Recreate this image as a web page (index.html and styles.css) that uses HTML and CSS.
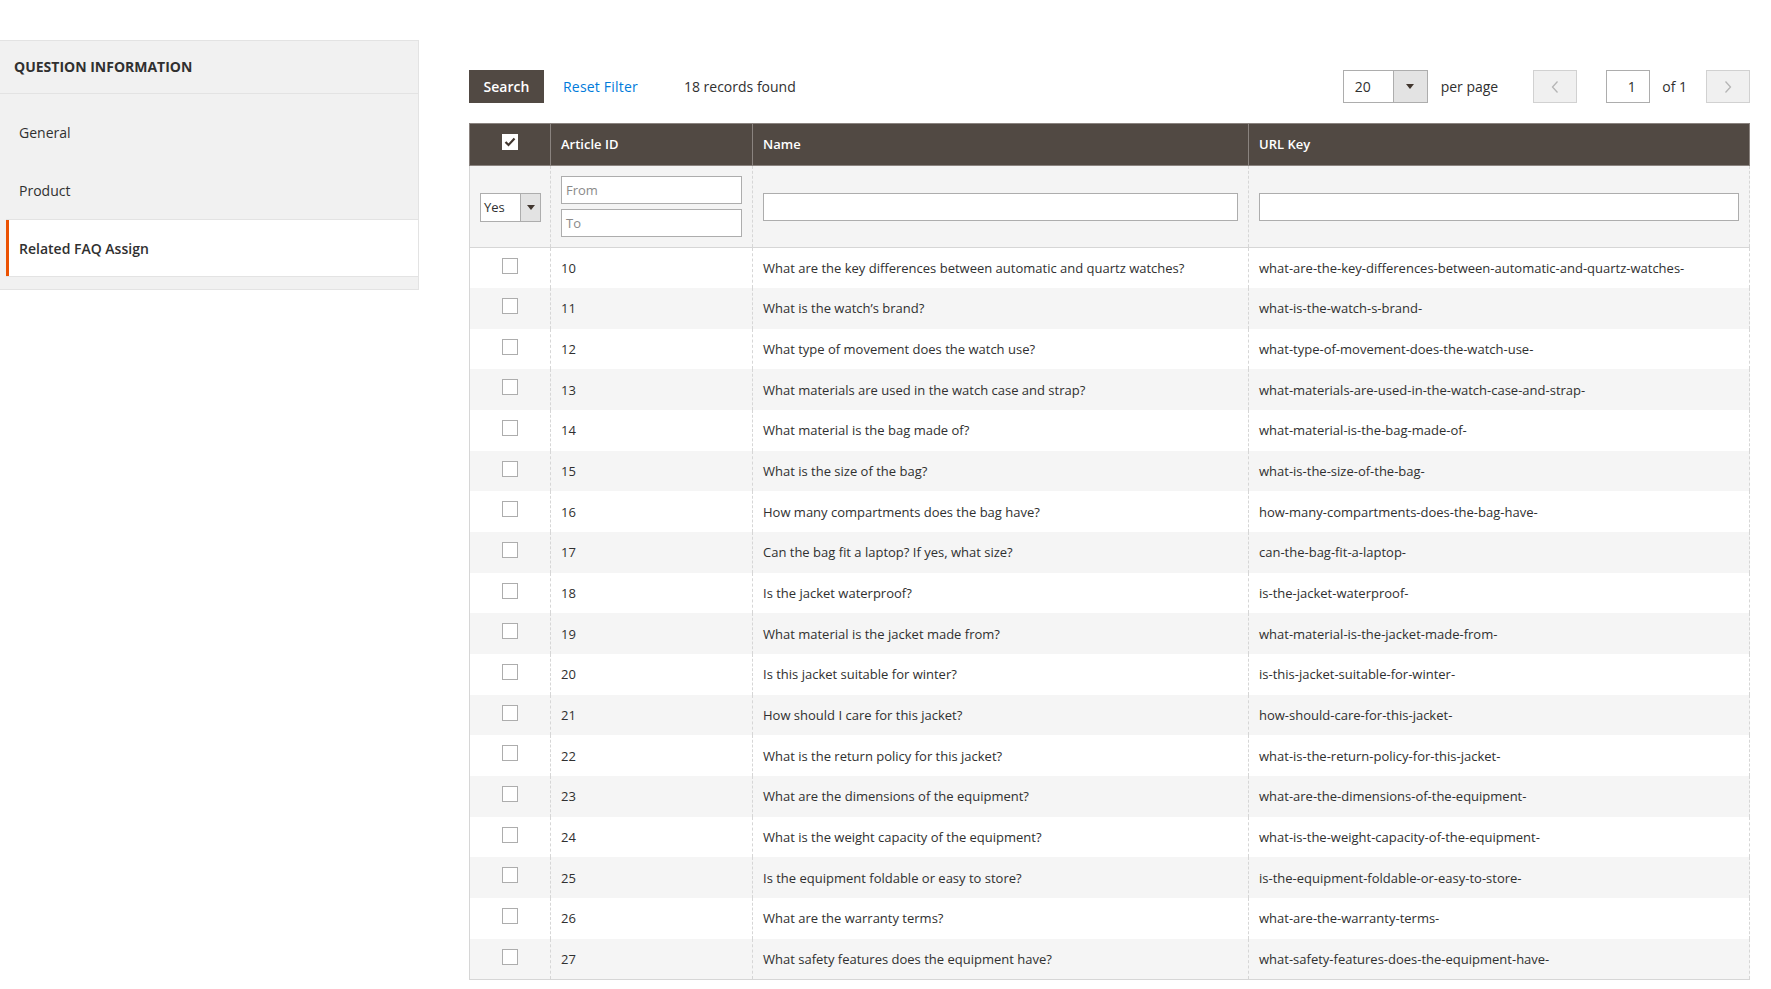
FILE: index.html
```html
<!DOCTYPE html>
<html lang="en">
<head>
<meta charset="utf-8">
<title>Related FAQ Assign</title>
<link rel="stylesheet" href="styles.css">
</head>
<body>
<div class="page">
  <aside class="nav">
    <div class="nav-title">Question Information</div>
    <ul class="nav-items">
      <li class="nav-item">General</li>
      <li class="nav-item">Product</li>
      <li class="nav-item active">Related FAQ Assign</li>
    </ul>
    <div class="nav-foot"></div>
  </aside>

  <main class="content">
    <div class="toolbar">
      <button class="btn-search">Search</button>
      <a class="reset-link">Reset Filter</a>
      <span class="records">18 records found</span>
      <div class="pager">
        <div class="limit-select"><span class="limit-value">20</span><span class="limit-arrow"><span class="tri"></span></span></div>
        <span class="per-page">per page</span>
        <button class="page-btn prev"><svg width="10" height="14" viewBox="0 0 10 14"><path d="M7.5 1.5 L2.5 7 L7.5 12.5" fill="none" stroke="#b5b5b5" stroke-width="1.3"/></svg></button>
        <span class="page-input">1</span>
        <span class="of-pages">of 1</span>
        <button class="page-btn next"><svg width="10" height="14" viewBox="0 0 10 14"><path d="M2.5 1.5 L7.5 7 L2.5 12.5" fill="none" stroke="#b5b5b5" stroke-width="1.3"/></svg></button>
      </div>
    </div>

    <table class="grid">
      <colgroup>
        <col class="c-check"><col class="c-id"><col class="c-name"><col class="c-url">
      </colgroup>
      <thead>
        <tr class="head-row">
          <th class="th-check"><span class="cb cb-head"><svg width="12" height="10" viewBox="0 0 12 10"><path d="M1.5 5 L4.5 8 L10.5 1.5" fill="none" stroke="#41362f" stroke-width="2.2"/></svg></span></th>
          <th>Article ID</th>
          <th>Name</th>
          <th>URL Key</th>
        </tr>
        <tr class="filter-row">
          <td class="f-check"><div class="yes-select"><span class="yes-value">Yes</span><span class="yes-arrow"><span class="tri"></span></span></div></td>
          <td class="f-id"><div class="inp ph">From</div><div class="inp ph">To</div></td>
          <td><div class="inp"></div></td>
          <td><div class="inp"></div></td>
        </tr>
      </thead>
      <tbody>
        <tr><td class="td-check"><span class="cb"></span></td><td>10</td><td>What are the key differences between automatic and quartz watches?</td><td>what-are-the-key-differences-between-automatic-and-quartz-watches-</td></tr>
        <tr><td class="td-check"><span class="cb"></span></td><td>11</td><td>What is the watch’s brand?</td><td>what-is-the-watch-s-brand-</td></tr>
        <tr><td class="td-check"><span class="cb"></span></td><td>12</td><td>What type of movement does the watch use?</td><td>what-type-of-movement-does-the-watch-use-</td></tr>
        <tr><td class="td-check"><span class="cb"></span></td><td>13</td><td>What materials are used in the watch case and strap?</td><td>what-materials-are-used-in-the-watch-case-and-strap-</td></tr>
        <tr><td class="td-check"><span class="cb"></span></td><td>14</td><td>What material is the bag made of?</td><td>what-material-is-the-bag-made-of-</td></tr>
        <tr><td class="td-check"><span class="cb"></span></td><td>15</td><td>What is the size of the bag?</td><td>what-is-the-size-of-the-bag-</td></tr>
        <tr><td class="td-check"><span class="cb"></span></td><td>16</td><td>How many compartments does the bag have?</td><td>how-many-compartments-does-the-bag-have-</td></tr>
        <tr><td class="td-check"><span class="cb"></span></td><td>17</td><td>Can the bag fit a laptop? If yes, what size?</td><td>can-the-bag-fit-a-laptop-</td></tr>
        <tr><td class="td-check"><span class="cb"></span></td><td>18</td><td>Is the jacket waterproof?</td><td>is-the-jacket-waterproof-</td></tr>
        <tr><td class="td-check"><span class="cb"></span></td><td>19</td><td>What material is the jacket made from?</td><td>what-material-is-the-jacket-made-from-</td></tr>
        <tr><td class="td-check"><span class="cb"></span></td><td>20</td><td>Is this jacket suitable for winter?</td><td>is-this-jacket-suitable-for-winter-</td></tr>
        <tr><td class="td-check"><span class="cb"></span></td><td>21</td><td>How should I care for this jacket?</td><td>how-should-care-for-this-jacket-</td></tr>
        <tr><td class="td-check"><span class="cb"></span></td><td>22</td><td>What is the return policy for this jacket?</td><td>what-is-the-return-policy-for-this-jacket-</td></tr>
        <tr><td class="td-check"><span class="cb"></span></td><td>23</td><td>What are the dimensions of the equipment?</td><td>what-are-the-dimensions-of-the-equipment-</td></tr>
        <tr><td class="td-check"><span class="cb"></span></td><td>24</td><td>What is the weight capacity of the equipment?</td><td>what-is-the-weight-capacity-of-the-equipment-</td></tr>
        <tr><td class="td-check"><span class="cb"></span></td><td>25</td><td>Is the equipment foldable or easy to store?</td><td>is-the-equipment-foldable-or-easy-to-store-</td></tr>
        <tr><td class="td-check"><span class="cb"></span></td><td>26</td><td>What are the warranty terms?</td><td>what-are-the-warranty-terms-</td></tr>
        <tr><td class="td-check"><span class="cb"></span></td><td>27</td><td>What safety features does the equipment have?</td><td>what-safety-features-does-the-equipment-have-</td></tr>
      </tbody>
    </table>
  </main>
</div>
</body>
</html>
```

FILE: styles.css
```css
* { box-sizing: border-box; }
html, body { margin: 0; padding: 0; background: #fff; }
body {
  font-family: "Open Sans", "Liberation Sans", sans-serif;
  color: #303030;
  font-size: 13px;
}

.page {
  display: flex;
  align-items: flex-start;
}

/* ---------- sidebar ---------- */
.nav {
  width: 419px;
  flex: 0 0 419px;
  margin-top: 40px;
  background: #f1f1f1;
  border: 1px solid #e3e3e3;
  border-left: 0;
}
.nav-title {
  height: 53px;
  padding: 0 0 2px 14px;
  display: flex;
  align-items: center;
  font-size: 14px;
  font-weight: 700;
  text-transform: uppercase;
  color: #303030;
  border-bottom: 1px solid #e3e3e3;
}
.nav-items {
  list-style: none;
  margin: 0;
  padding: 0;
}
.nav-item {
  height: 58px;
  display: flex;
  align-items: center;
  padding-left: 19px;
  font-size: 14px;
  color: #303030;
}
.nav-item:first-child { height: 67px; padding-top: 10px; }
.nav-item.active {
  background: #fff;
  border-top: 1px solid #e3e3e3;
  border-bottom: 1px solid #e3e3e3;
  box-shadow: inset 3px 0 0 #eb5202;
  margin-left: 6px;
  padding-left: 13px;
  font-weight: 600;
  color: #303030;
}
.nav-foot { height: 12px; }

/* ---------- main ---------- */
.content {
  flex: 1;
  margin-left: 50px;
  margin-right: 21px;
  padding-top: 70px;
}

.toolbar {
  display: flex;
  align-items: center;
  height: 33px;
  margin-bottom: 20px;
  font-size: 14px;
}
.btn-search {
  width: 75px;
  height: 33px;
  border: 0;
  background: #514943;
  color: #fff;
  font-family: inherit;
  font-size: 14px;
  font-weight: 600;
  padding: 0;
}
.reset-link {
  margin-left: 19px;
  color: #007bdb;
  cursor: pointer;
  letter-spacing: 0.2px;
}
.records {
  margin-left: 46px;
  color: #303030;
}
.pager {
  margin-left: auto;
  display: flex;
  align-items: center;
}
.limit-select {
  width: 85px;
  height: 33px;
  border: 1px solid #adadad;
  display: flex;
  background: #fff;
}
.limit-value {
  flex: 1;
  padding-left: 11px;
  line-height: 31px;
}
.limit-arrow {
  width: 34px;
  border-left: 1px solid #adadad;
  background: #e3e3e3;
  display: flex;
  align-items: center;
  justify-content: center;
}
.tri {
  width: 0;
  height: 0;
  border-left: 4px solid transparent;
  border-right: 4px solid transparent;
  border-top: 5px solid #41362f;
}
.per-page { margin-left: 13px; }
.page-btn {
  width: 44px;
  height: 33px;
  border: 1px solid #d1d1d1;
  background: #f0f0f0;
  display: flex;
  align-items: center;
  justify-content: center;
  padding: 0;
}
.prev { margin-left: 35px; }
.page-input {
  margin-left: 29px;
  width: 44px;
  height: 33px;
  border: 1px solid #adadad;
  text-align: center;
  line-height: 31px;
  padding-left: 7px;
}
.of-pages { margin-left: 12px; }
.next { margin-left: 19px; }

/* ---------- grid ---------- */
.grid {
  width: 100%;
  table-layout: fixed;
  border-collapse: collapse;
  font-size: 13px;
}
.c-check { width: 81px; }
.c-id { width: 202px; }
.c-name { width: 496px; }

.head-row th {
  background: #514943;
  color: #fff;
  font-weight: 600;
  text-align: left;
  height: 42px;
  padding: 0 10px 2px;
  border: 1px solid #8a837f;
  vertical-align: middle;
}
.head-row .th-check {
  text-align: center;
  padding: 0;
  vertical-align: top;
  padding-top: 10px;
  line-height: 0;
}
.cb {
  display: inline-block;
  width: 16px;
  height: 16px;
  border: 1px solid #adadad;
  background: #fff;
  vertical-align: top;
}
.cb-head {
  border-color: #fff;
  display: inline-flex;
  align-items: center;
  justify-content: center;
}

.filter-row td {
  background: #f4f4f4;
  height: 82px;
  padding: 0 10px;
  border-left: 1px dashed #d6d6d6;
  border-right: 1px dashed #d6d6d6;
  border-bottom: 1px solid #d6d6d6;
  vertical-align: middle;
}
.filter-row td.f-check {
  border-left: 1px solid #d6d6d6;
  padding-left: 10px;
}
.yes-select {
  width: 61px;
  height: 29px;
  border: 1px solid #adadad;
  display: flex;
  background: #fff;
  margin-top: 1px;
}
.yes-value {
  flex: 1;
  padding-left: 3px;
  line-height: 27px;
  font-size: 13px;
}
.yes-arrow {
  width: 20px;
  border-left: 1px solid #adadad;
  background: #e3e3e3;
  display: flex;
  align-items: center;
  justify-content: center;
}
.inp {
  height: 28px;
  border: 1px solid #adadad;
  background: #fff;
  padding-left: 4px;
  line-height: 26px;
  font-size: 13px;
}
.f-id .inp + .inp { margin-top: 5px; }
.inp.ph { color: #8a8a8a; }

tbody td {
  height: 40.67px;
  padding: 0 10px;
  border-left: 1px dashed #d6d6d6;
  border-right: 1px dashed #d6d6d6;
  vertical-align: middle;
  color: #303030;
  white-space: nowrap;
}
tbody tr:nth-child(even) td { background: #f5f5f5; }
tbody td.td-check {
  text-align: center;
  padding: 10px 0 0;
  vertical-align: top;
  line-height: 0;
  border-left: 1px solid #d6d6d6;
}
tbody tr:last-child td { border-bottom: 1px solid #d6d6d6; }
```
